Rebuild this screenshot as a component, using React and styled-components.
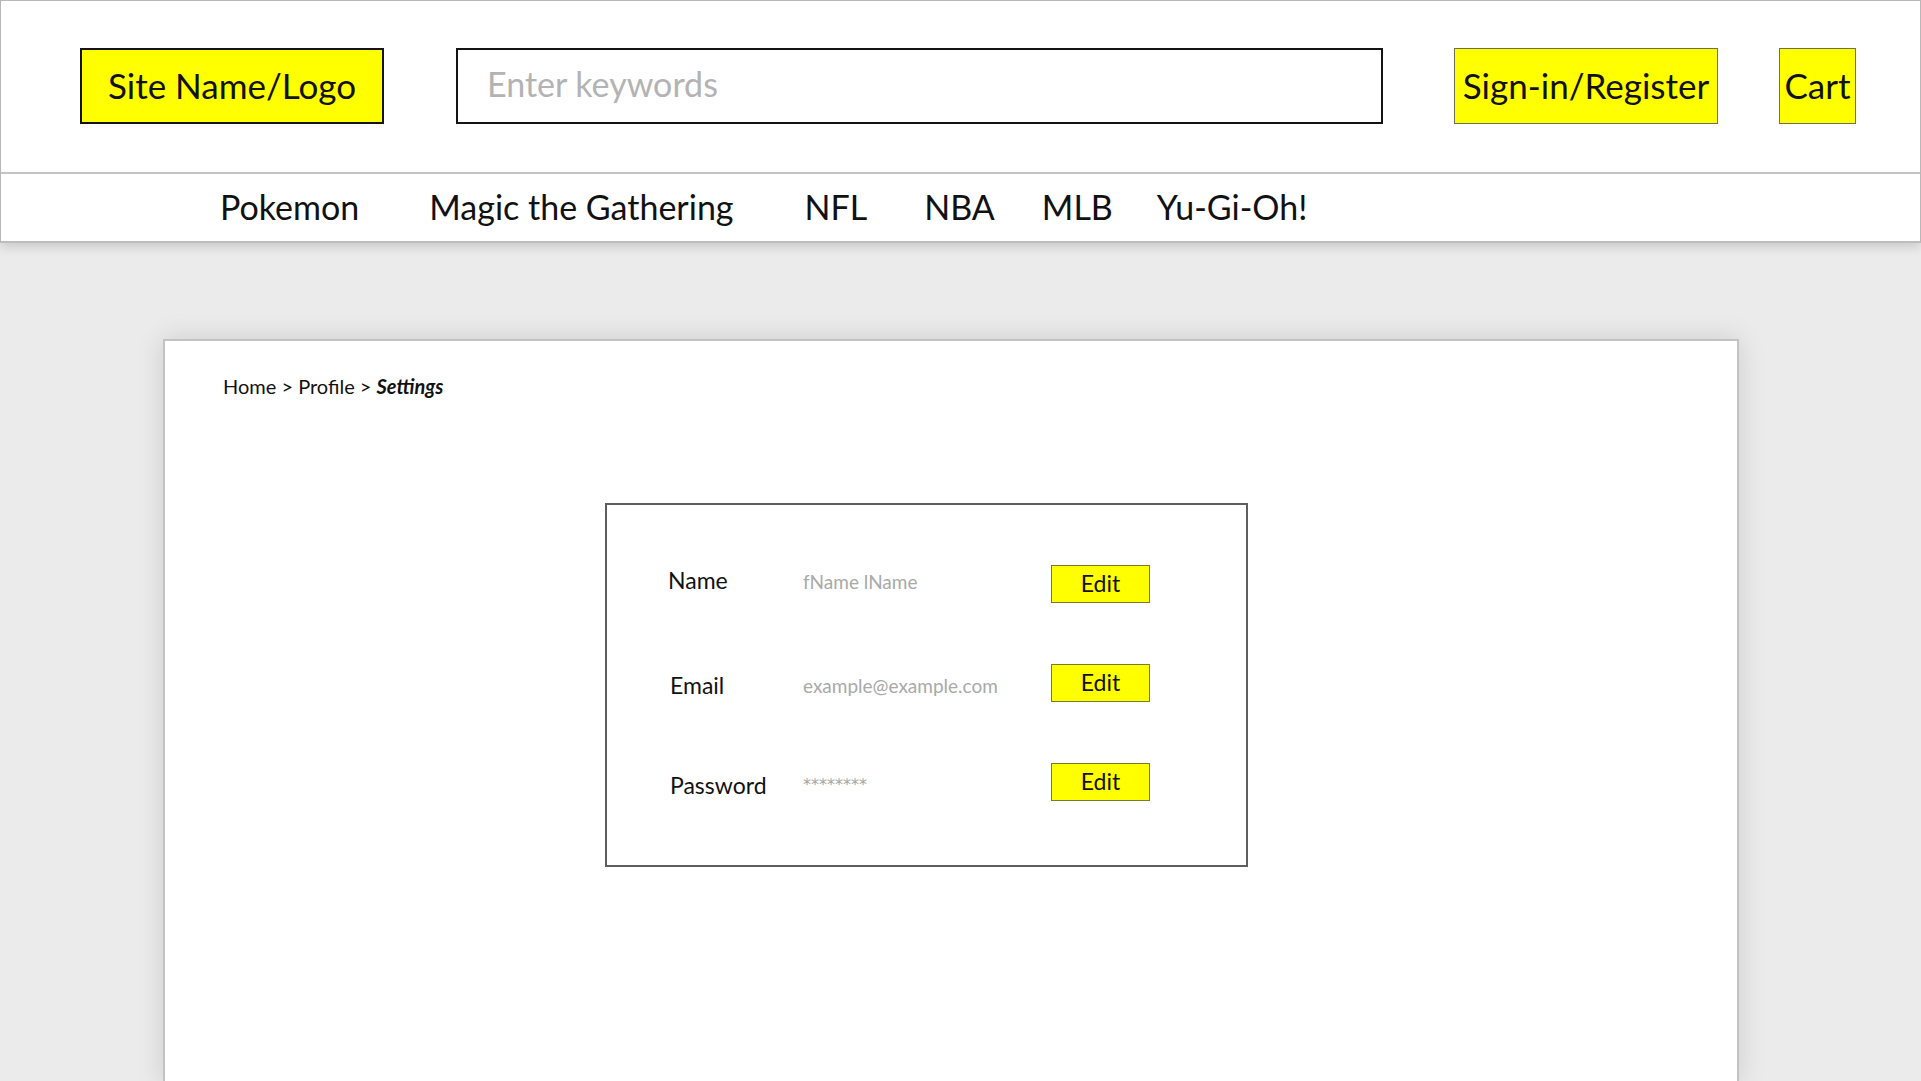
import React from "react";
import styled, { createGlobalStyle } from "styled-components";

const GlobalStyle = createGlobalStyle`
  html, body {
    margin: 0;
    padding: 0;
    background: #ebebeb;
    font-family: Lato, "Open Sans", "Liberation Sans", sans-serif;
    color: #111;
  }
  * { box-sizing: border-box; }
`;

const Page = styled.div`
  width: 1921px;
  height: 1081px;
  overflow: hidden;
  background: #ebebeb;
`;

const Header = styled.header`
  position: relative;
  z-index: 2;
  background: #fff;
  border: 1px solid #b8b8b8;
  border-bottom: 2px solid #bdbdbd;
  box-shadow: 0 4px 10px rgba(0, 0, 0, 0.14);
`;

const TopBar = styled.div`
  height: 171px;
  display: flex;
  align-items: center;
  padding-left: 79px;
  padding-bottom: 1px;
`;

const Logo = styled.div`
  width: 304px;
  height: 76px;
  background: #ffff00;
  border: 2px solid #141414;
  display: flex;
  align-items: center;
  justify-content: center;
  font-size: 35px;
  line-height: 1;
  padding-bottom: 2px;
`;

const Search = styled.input`
  margin-left: 72px;
  width: 927px;
  height: 76px;
  border: 2px solid #141414;
  border-radius: 0;
  background: #fff;
  padding: 0 0 6px 29px;
  font-family: inherit;
  font-size: 34px;
  color: #111;
  outline: none;
  &::placeholder {
    color: #b3b3b3;
  }
`;

const AccountButton = styled.button`
  margin-left: ${(p) => p.$gap}px;
  width: ${(p) => p.$width}px;
  height: 76px;
  background: #ffff00;
  border: 1px solid #6f6f55;
  border-radius: 0;
  padding: 0 0 2px;
  font-family: inherit;
  font-size: 35px;
  color: #111;
  display: flex;
  align-items: center;
  justify-content: center;
  white-space: nowrap;
`;

const NavBar = styled.nav`
  height: 69px;
  border-top: 2px solid #c4c4c4;
  display: flex;
  align-items: center;
  padding-left: 219px;
  padding-bottom: 2px;
`;

const NavLink = styled.a`
  margin-left: ${(p) => p.$gap || 0}px;
  font-size: 34px;
  color: #111;
  text-decoration: none;
  white-space: nowrap;
`;

const Main = styled.main`
  padding: 96px 0 0 163px;
`;

const Card = styled.section`
  width: 1576px;
  height: 745px;
  background: #fff;
  border: 2px solid #c2c2c2;
  box-shadow: 0 0 26px rgba(0, 0, 0, 0.13);
  padding: 33px 0 0 58px;
`;

const Breadcrumb = styled.div`
  font-size: 20px;
  line-height: 24px;
  color: #111;
`;

const Current = styled.span`
  font-weight: 700;
  font-style: italic;
`;

const SettingsBox = styled.div`
  margin: 105px 0 0 382px;
  width: 643px;
  height: 364px;
  border: 2px solid #5e5e5e;
  padding: 60px 0 0 61px;
  display: grid;
  grid-template-columns: 135px 248px 99px;
  grid-auto-rows: 38px;
  row-gap: 61px;
  align-items: center;
`;

const Label = styled.div`
  font-size: 23px;
  color: #111;
  margin-left: ${(p) => p.$shift || 0}px;
  padding-bottom: ${(p) => p.$lift || 0}px;
  padding-top: ${(p) => p.$drop || 0}px;
`;

const Value = styled.div`
  font-size: 19px;
  color: #a9a9a9;
  padding-top: ${(p) => p.$drop || 0}px;
  padding-bottom: ${(p) => p.$lift || 0}px;
`;

const MaskedValue = styled(Value)`
  font-family: "DejaVu Sans", "Liberation Sans", sans-serif;
  font-size: 16px;
  letter-spacing: 0;
  color: #a5a5a5;
`;

const EditButton = styled.button`
  width: 99px;
  height: 38px;
  background: #ffff00;
  border: 1px solid #7a7a30;
  border-radius: 0;
  padding: 0 0 2px;
  font-family: inherit;
  font-size: 23px;
  color: #111;
`;

const rows = [
  { label: "Name", value: "fName lName", shift: 0, lift: 8, drop: 0, vlift: 6, vdrop: 0 },
  { label: "Email", value: "example@example.com", shift: 2, lift: 0, drop: 4, vlift: 0, vdrop: 4 },
  { label: "Password", value: "********", shift: 2, lift: 0, drop: 6, vlift: 0, vdrop: 5, masked: true },
];

export default function App() {
  return (
    <Page>
      <GlobalStyle />
      <Header>
        <TopBar>
          <Logo>Site Name/Logo</Logo>
          <Search placeholder="Enter keywords" />
          <AccountButton $gap={71} $width={264}>Sign-in/Register</AccountButton>
          <AccountButton $gap={61} $width={77}>Cart</AccountButton>
        </TopBar>
        <NavBar>
          <NavLink href="#">Pokemon</NavLink>
          <NavLink href="#" $gap={70}>Magic the Gathering</NavLink>
          <NavLink href="#" $gap={71}>NFL</NavLink>
          <NavLink href="#" $gap={57}>NBA</NavLink>
          <NavLink href="#" $gap={47}>MLB</NavLink>
          <NavLink href="#" $gap={44}>Yu-Gi-Oh!</NavLink>
        </NavBar>
      </Header>
      <Main>
        <Card>
          <Breadcrumb>
            Home &gt; Profile &gt; <Current>Settings</Current>
          </Breadcrumb>
          <SettingsBox>
            {rows.map((r) => {
              const V = r.masked ? MaskedValue : Value;
              return (
                <React.Fragment key={r.label}>
                  <Label $shift={r.shift} $lift={r.lift} $drop={r.drop}>
                    {r.label}
                  </Label>
                  <V $drop={r.vdrop} $lift={r.vlift}>
                    {r.value}
                  </V>
                  <EditButton>Edit</EditButton>
                </React.Fragment>
              );
            })}
          </SettingsBox>
        </Card>
      </Main>
    </Page>
  );
}
